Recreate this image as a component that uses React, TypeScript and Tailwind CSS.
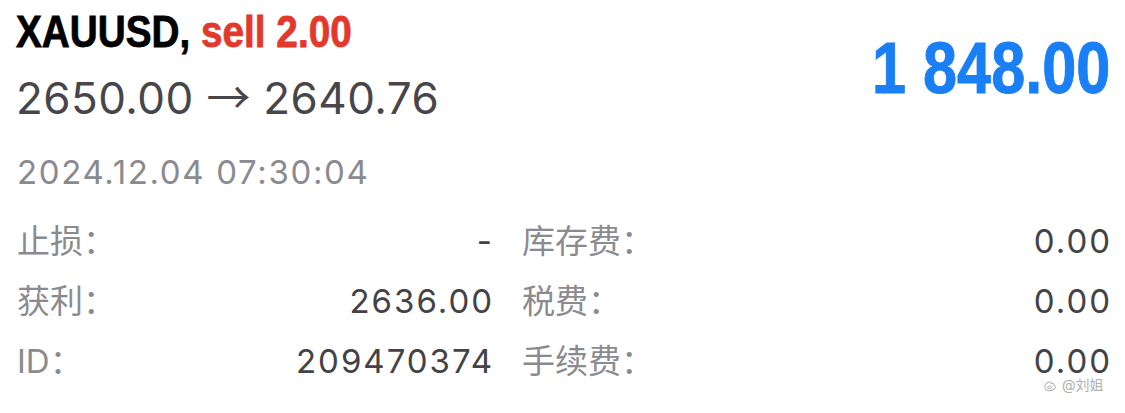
import React from "react";

const rows = [
  { label: "止损：", value: "-", label2: "库存费：", value2: "0.00" },
  { label: "获利：", value: "2636.00", label2: "税费：", value2: "0.00" },
  { label: "ID：", value: "209470374", label2: "手续费：", value2: "0.00" },
];

function WeiboMark() {
  return (
    <svg width="15" height="15" viewBox="0 0 16 16" fill="none" className="shrink-0">
      <path
        d="M3 9.5c0-2.6 2.4-5 5-5.3 1.6-.2 2.3.6 1.8 1.8 1.6-.7 3.1-.3 2.7 1.2 1.1.4 1.7 1.1 1.7 2.1 0 2.2-2.9 4.2-6.4 4.2C4.9 13.5 3 11.8 3 9.5z"
        stroke="#b4b4b4"
        strokeWidth="1.1"
      />
      <ellipse cx="8" cy="10" rx="2.2" ry="1.6" stroke="#b4b4b4" strokeWidth="1" />
      <circle cx="7.6" cy="10.1" r="0.6" fill="#b4b4b4" />
    </svg>
  );
}

export default function App() {
  return (
    <div className="relative w-[1125px] h-[413px] overflow-hidden bg-white font-['Inter','Noto_Sans_CJK_SC',sans-serif]">
      <div className="flex justify-between pl-4 pr-[15px]">
        <div>
          <div className="h-[64px] leading-[64px] text-[44px] font-bold font-['Liberation_Sans',sans-serif] whitespace-nowrap [-webkit-text-stroke:0.8px]">
            <span className="inline-block origin-left scale-x-[0.88]">
              <span className="text-black">XAUUSD, </span>
              <span className="text-[#e3392c]">sell 2.00</span>
            </span>
          </div>
          <div className="h-[62px] leading-[62px] text-[44px] text-[#47474b] whitespace-nowrap tracking-[0.01em]">
            2650.00 <span className="font-['Noto_Sans_CJK_SC',sans-serif] tracking-normal">→</span> 2640.76
          </div>
        </div>
        <div className="mt-[28px] h-[80px] leading-[80px] text-[72px] font-bold font-['Liberation_Sans',sans-serif] text-[#1a7ff4] whitespace-nowrap [-webkit-text-stroke:1px]">
          <span className="inline-block origin-right scale-x-[0.85]">1 848.00</span>
        </div>
      </div>

      <div className="mt-[26px] pl-[17px] h-[40px] leading-[40px] text-[33px] text-[#8b8b8f] tracking-[0.05em]">
        2024.12.04 07:30:04
      </div>

      <div className="mt-[19px] pl-[17px] pr-[15px] text-[33px]">
        {rows.map((r) => (
          <div key={r.label} className="flex h-[60px] leading-[60px] gap-[30px] whitespace-nowrap">
            <div className="flex w-[475px] justify-between">
              <span className="text-[#8b8b8f]">{r.label}</span>
              <span className="text-[#434347] tracking-[0.06em] -mr-[2px]">{r.value}</span>
            </div>
            <div className="flex flex-1 justify-between">
              <span className="text-[#8b8b8f]">{r.label2}</span>
              <span className="text-[#434347] tracking-[0.06em] -mr-[2px]">{r.value2}</span>
            </div>
          </div>
        ))}
      </div>

      <div className="absolute left-[1042px] top-[377px] flex items-center gap-[5px] text-[14px] leading-[16px] text-[#b0b0b0]">
        <WeiboMark />
        <span>@刘姐</span>
      </div>
    </div>
  );
}
